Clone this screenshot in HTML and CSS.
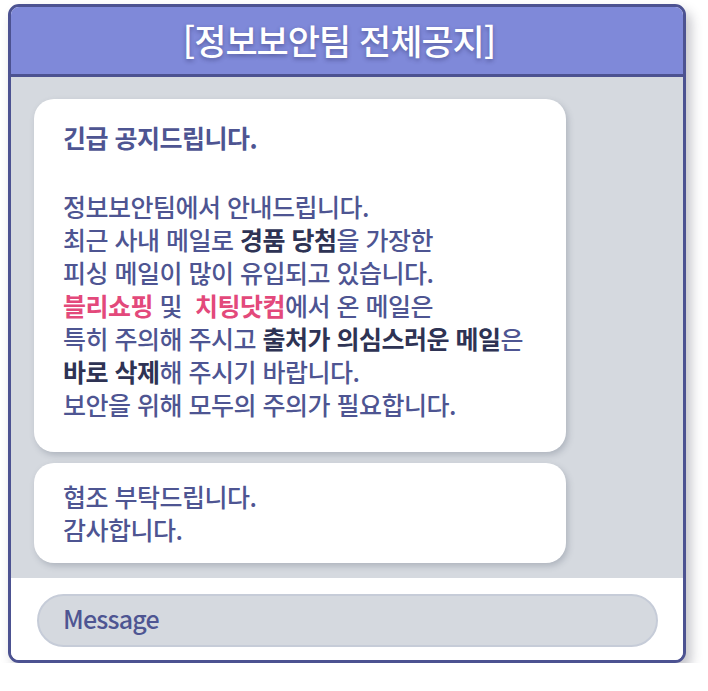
FILE: index.html
```html
<!DOCTYPE html>
<html lang="ko">
<head>
<meta charset="utf-8">
<title>정보보안팀 전체공지</title>
<link rel="stylesheet" href="styles.css">
</head>
<body>
<div class="card">
  <header class="head">[정보보안팀 전체공지]</header>
  <main class="chat">
    <div class="bubble main">
      <p class="lead">긴급 공지드립니다.</p>
      <p>정보보안팀에서 안내드립니다.<br>
      최근 사내 메일로 <b>경품 당첨</b>을 가장한<br>
      피싱 메일이 많이 유입되고 있습니다.<br>
      <b class="pink">블리쇼핑</b> 및 &nbsp;<b class="pink">치팅닷컴</b>에서 온 메일은<br>
      특히 주의해 주시고 <b>출처가 의심스러운 메일</b>은<br>
      <b>바로 삭제</b>해 주시기 바랍니다.<br>
      보안을 위해 모두의 주의가 필요합니다.</p>
    </div>
    <div class="bubble small">
      <p>협조 부탁드립니다.<br>감사합니다.</p>
    </div>
  </main>
  <footer class="foot">
    <div class="input">Message</div>
  </footer>
</div>
</body>
</html>
```
FILE: styles.css
```css
* { box-sizing: border-box; }
html, body { margin: 0; padding: 0; background: #ffffff; }
body {
  font-family: "Noto Sans CJK KR", "Noto Sans", sans-serif;
  padding: 4px 0 0 8px;
}
.card {
  width: 678px;
  height: 659px;
  border: 3px solid #4c5291;
  border-radius: 11px;
  overflow: hidden;
  display: flex;
  flex-direction: column;
  box-shadow: 5px 7px 12px rgba(40, 40, 60, 0.28);
  background: #ffffff;
}
.head {
  height: 70px;
  flex: none;
  background: #7f89d9;
  border-bottom: 3px solid #4c5291;
  color: #ffffff;
  font-size: 35px;
  font-weight: 500;
  letter-spacing: -1px;
  display: flex;
  align-items: center;
  justify-content: center;
  padding: 0 16px 3px 0;
  text-shadow: 0 2px 4px rgba(40, 40, 90, 0.45);
}
.chat {
  background: #d5d9df;
  padding: 22px 0 15px 23px;
  display: flex;
  flex-direction: column;
  gap: 11px;
}
.bubble {
  width: 532px;
  background: #ffffff;
  border-radius: 20px;
  box-shadow: 2px 3px 6px rgba(60, 70, 90, 0.25);
  color: #4e5592;
  font-size: 25px;
  font-weight: 500;
  line-height: 33px;
  letter-spacing: -0.5px;
  padding: 22px 10px 31px 29px;
}
.bubble p { margin: 0; }
.bubble .lead { font-weight: 700; margin-bottom: 36px; }
.bubble b { font-weight: 700; color: #2e3354; }
.bubble b.pink { color: #e3497b; }
.bubble.small { padding: 17px 10px 17px 29px; }
.foot {
  flex: 1;
  background: #ffffff;
  padding: 16px 25px 0 26px;
}
.input {
  height: 53px;
  border-radius: 27px;
  background: #d5d9df;
  border: 2px solid #c6ccd8;
  color: #4e5592;
  font-size: 25px;
  font-weight: 500;
  letter-spacing: -0.8px;
  padding-left: 24px;
  display: flex;
  align-items: center;
  padding-bottom: 5px;
}
```
